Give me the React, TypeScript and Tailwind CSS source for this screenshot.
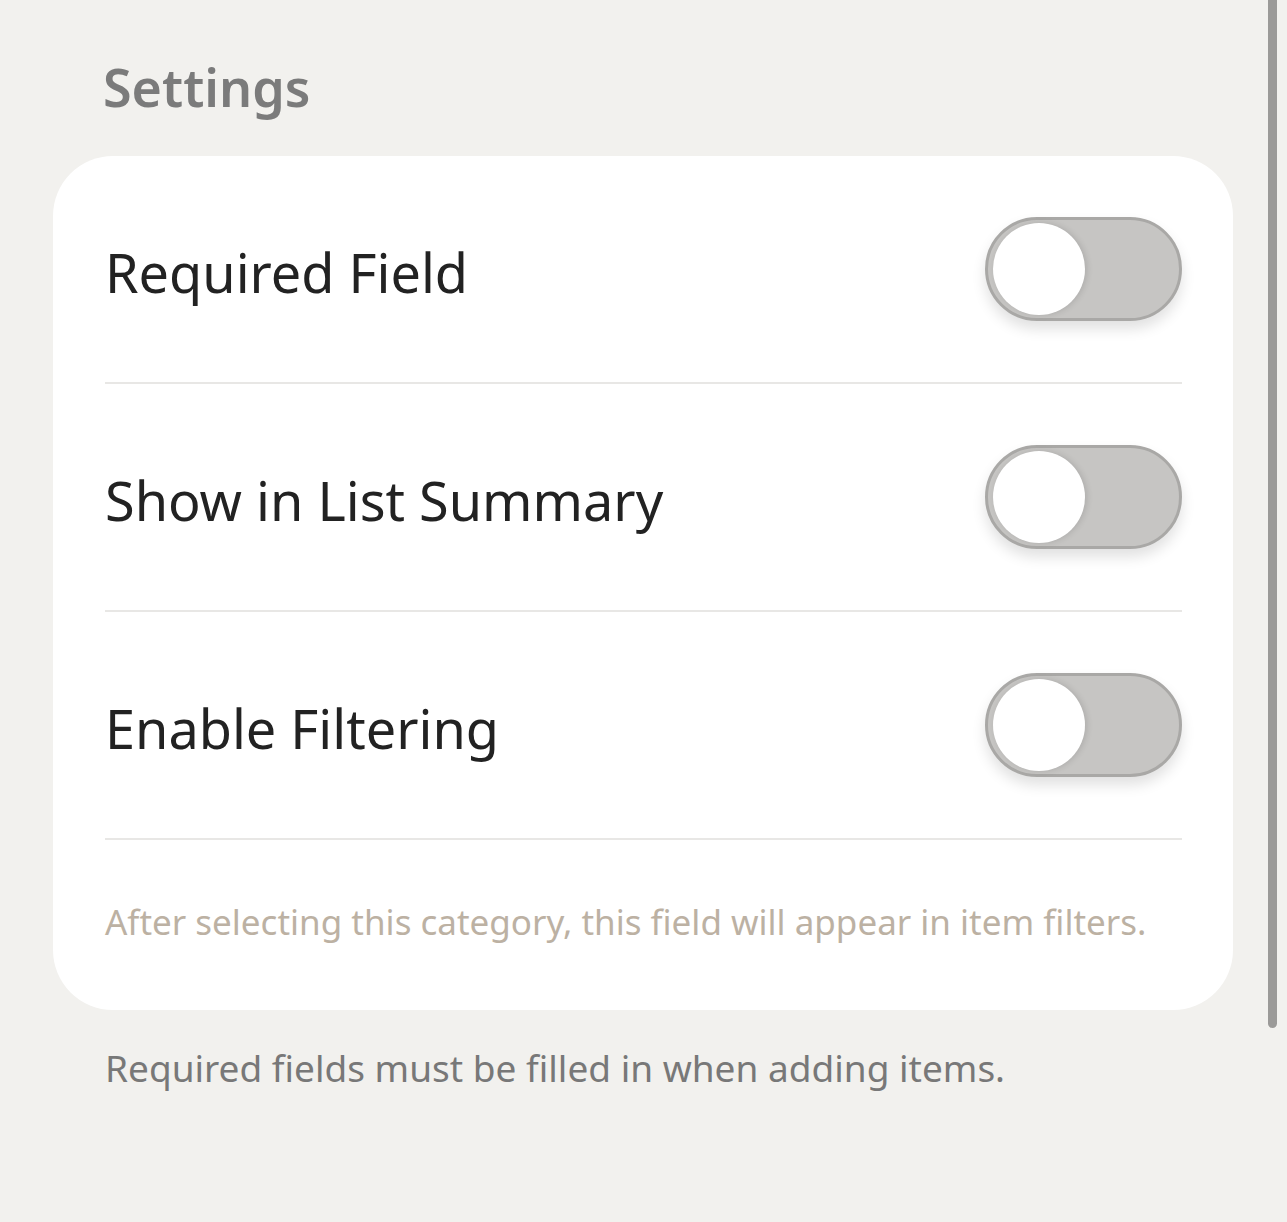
import { useState } from 'react';

const font = { fontFamily: '"Noto Sans", "Open Sans", sans-serif' };

function Toggle({ on, onChange }: { on: boolean; onChange: () => void }) {
  return (
    <button
      onClick={onChange}
      className="relative flex h-[104px] w-[197px] shrink-0 items-center rounded-full border-[3px] border-[#a9a8a6] bg-[#c6c5c3] px-[5px] shadow-[0_8px_14px_rgba(0,0,0,0.12)]"
    >
      <span
        className={
          'h-[92px] w-[92px] rounded-full bg-white shadow-[2px_0_6px_rgba(0,0,0,0.12)] transition-transform ' +
          (on ? 'translate-x-[92px]' : 'translate-x-0')
        }
      />
    </button>
  );
}

export default function App() {
  const [toggles, setToggles] = useState([false, false, false]);
  const labels = ['Required Field', 'Show in List Summary', 'Enable Filtering'];

  return (
    <div className="relative min-h-[1222px] w-full overflow-hidden bg-[#f2f1ee]" style={font}>
      {/* ── scrollbar ── */}
      <div className="absolute right-[10px] top-[-20px] h-[1048px] w-[9px] rounded-full bg-[#9b9a98]" />

      <div className="w-[1180px] pl-[53px] pt-[50px]" style={{ boxSizing: 'content-box' }}>
        <h1 className="pl-[50px] text-[52px] font-semibold leading-[74px] text-[#7b7b7b]">Settings</h1>

        {/* ── card ── */}
        <div className="mt-[32px] rounded-[60px] bg-white pl-[52px] pr-[51px]">
          {labels.map((label, i) => (
            <div
              key={label}
              className="flex h-[228px] items-center justify-between border-b-2 border-[#e8e7e5]"
            >
              <span className="pt-[6px] text-[54px] leading-none text-[#222222]">{label}</span>
              <Toggle
                on={toggles[i]}
                onChange={() => setToggles((t) => t.map((v, j) => (j === i ? !v : v)))}
              />
            </div>
          ))}
          <p className="pt-[60px] pb-[66px] text-[35px] leading-[44px] text-[#bcb1a3]">
            After selecting this category, this field will appear in item filters.
          </p>
        </div>

        <p className="mt-[34px] pl-[52px] text-[37px] leading-[48px] text-[#787878]">
          Required fields must be filled in when adding items.
        </p>
      </div>
    </div>
  );
}
